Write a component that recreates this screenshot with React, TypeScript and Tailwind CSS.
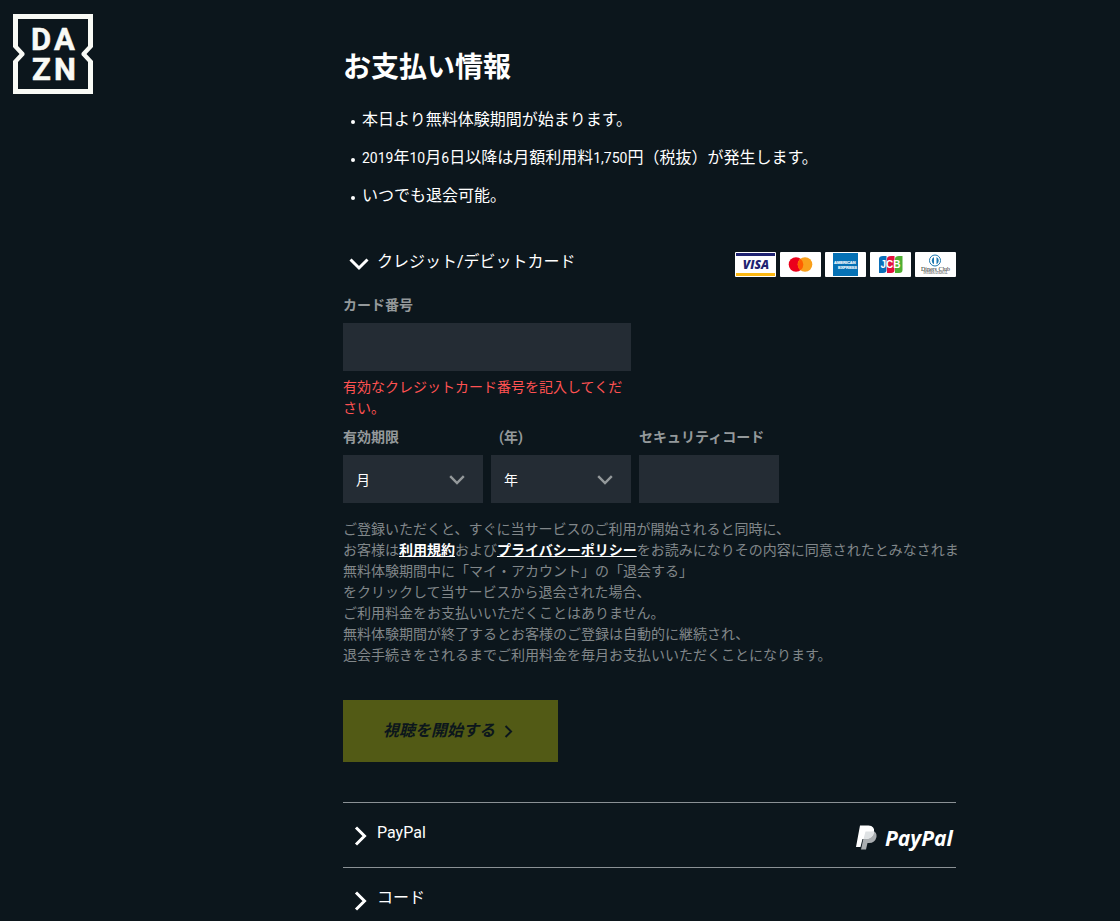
import React from 'react';
import clsx from 'clsx';

const notes = [
  '本日より無料体験期間が始まります。',
  '2019年10月6日以降は月額利用料1,750円（税抜）が発生します。',
  'いつでも退会可能。',
];

const months = Array.from({ length: 12 }, (_, i) => String(i + 1));
const years = Array.from({ length: 10 }, (_, i) => String(2019 + i));

function DaznLogo() {
  return (
    <svg width="80" height="80" viewBox="0 0 80 80" role="img" aria-label="DAZN">
      <path
        d="M0 0H80V33L73.500 40L80 47V80H0V47L6.500 40L0 33V0ZM5 5V32L11.500 39V41L5 48V75H75V48L68.500 41V39L75 32V5Z"
        fill="#f9faf5"
        fillRule="evenodd"
      />
      <g
        fill="#f9faf5"
        stroke="#f9faf5"
        strokeWidth="0.500"
        fontFamily="Roboto, sans-serif"
        fontWeight="700"
        fontSize="31"
      >
        <text x="18 41" y="36">DA</text>
        <text x="19 41" y="66">ZN</text>
      </g>
    </svg>
  );
}

interface ChevronProps {
  direction: 'down' | 'right';
  className?: string;
}

function Chevron({ direction, className }: ChevronProps) {
  return (
    <svg
      viewBox="0 0 20 20"
      fill="none"
      stroke="currentColor"
      strokeWidth="3"
      className={clsx('shrink-0', className)}
      aria-hidden="true"
    >
      <path d={direction === 'down' ? 'M1.500 6.500L10 15L18.500 6.500' : 'M7 1.500L15.500 10L7 18.500'} />
    </svg>
  );
}

function CardIcon({ label, children }: { label: string; children: React.ReactNode }) {
  return (
    <svg width="41" height="25" viewBox="0 0 41 25" role="img" aria-label={label}>
      <rect width="41" height="25" rx="1" fill="#fff" />
      {children}
    </svg>
  );
}

function CardIcons() {
  return (
    <span className="flex gap-1">
      <CardIcon label="Visa">
        <path d="M1 1H40V4H1Z" fill="#1f2372" />
        <path d="M1 21H40V24H1Z" fill="#fcb813" />
        <text x="21" y="17" textAnchor="middle" fontFamily="Open Sans, sans-serif" fontSize="12" fontWeight="800" fontStyle="italic" fill="#1f2372">
          VISA
        </text>
      </CardIcon>
      <CardIcon label="Mastercard">
        <circle cx="16" cy="12.500" r="7.300" fill="#eb001b" />
        <circle cx="25" cy="12.500" r="7.300" fill="#f9a01b" />
        <path d="M20.500 6.700a7.300 7.300 0 0 1 0 11.600a7.300 7.300 0 0 1 0-11.600Z" fill="#ff5f00" />
      </CardIcon>
      <CardIcon label="American Express">
        <path d="M8 1H33V24H8Z" fill="#0571b5" />
        <g fontFamily="Liberation Sans, sans-serif" fontSize="4" fontWeight="700" fill="#e8f3fa" stroke="#e8f3fa" strokeWidth="0.200">
          <text x="9" y="12">AMERICAN</text>
          <text x="13" y="17">EXPRESS</text>
        </g>
      </CardIcon>
      <CardIcon label="JCB">
        <path d="M13 4H16.500V18Q16.500 21 13 21H9V7Q9 4 13 4Z" fill="#0b6fb8" />
        <path d="M21 4H24.500V18Q24.500 21 21 21H17V7Q17 4 21 4Z" fill="#e3103c" />
        <path d="M29 4H32.500V18Q32.500 21 29 21H25V7Q25 4 29 4Z" fill="#4fae32" />
        <text x="20.500" y="16" textAnchor="middle" fontFamily="Liberation Sans, sans-serif" fontSize="10" fontWeight="700" fill="#fff">
          JCB
        </text>
      </CardIcon>
      <CardIcon label="Diners Club International">
        <circle cx="20" cy="8.500" r="5.500" fill="#fff" stroke="#1d78b0" strokeWidth="1" />
        <path d="M19 5a4 4 0 0 0 0 7.200ZM21.500 5v7.200a4 4 0 0 0 0-7.200Z" fill="#1d78b0" />
        <text x="20.500" y="19" textAnchor="middle" fontFamily="Liberation Serif, serif" fontSize="6" fill="#222">
          Diners Club
        </text>
        <text x="20.500" y="22" textAnchor="middle" fontFamily="Liberation Serif, serif" fontSize="3" fill="#222">
          INTERNATIONAL
        </text>
      </CardIcon>
    </span>
  );
}

function PayPalLogo() {
  return (
    <svg width="100" height="30" viewBox="0 0 100 30" role="img" aria-label="PayPal">
      <path d="M9 6H17Q21 7 20.500 12Q19 18 13 18H11.500L10 24.500H5Z" fill="#a9adb0" />
      <path d="M4 0.500H12.500Q19 1 18 7Q16.500 14 9.500 14H6.500L4.500 22H0Z" fill="#fff" />
      <path d="M9.500 6.500H16L18.200 6Q17.500 14 9.500 14H7.500Z" fill="#dfe2e4" />
      <text x="29" y="21" fontFamily="Open Sans, sans-serif" fontSize="21" fontWeight="700" fontStyle="italic" fill="#fff">
        PayPal
      </text>
    </svg>
  );
}

// Numerals are set a size smaller than the Japanese text around them
function NoteText({ text }: { text: string }) {
  return (
    <span>
      {text.split(/([\d,]+)/).map((part, index) =>
        /\d/.test(part) ? <span key={index} className="text-sm leading-none">{part}</span> : part
      )}
    </span>
  );
}

interface FieldProps {
  id: string;
  label: string;
  labelClassName?: string;
  className?: string;
  children: React.ReactNode;
}

function Field({ id, label, labelClassName, className, children }: FieldProps) {
  return (
    <div className={className}>
      <label htmlFor={id} className={clsx('mb-2 block text-sm font-bold text-[#94999b]', labelClassName)}>
        {label}
      </label>
      {children}
    </div>
  );
}

function SelectBox({ id, placeholder, options }: { id: string; placeholder: string; options: string[] }) {
  return (
    <div className="relative">
      <select id={id} defaultValue="" className="block h-12 w-full appearance-none bg-[#242c34] pt-px pr-10 pl-[13px] text-sm text-white">
        <option value="">{placeholder}</option>
        {options.map((option) => (
          <option key={option} value={option}>{option}</option>
        ))}
      </select>
      <Chevron direction="down" className="pointer-events-none absolute top-4 right-[18px] size-4 text-[#94999b]" />
    </div>
  );
}

export default function App() {
  return (
    <div className="flex min-h-screen flex-col bg-[#0c161c] font-[Roboto,'Noto_Sans_CJK_JP',sans-serif] text-white md:flex-row">
      <header className="shrink-0 pt-[14px] pl-[13px] md:w-[343px]">
        <DaznLogo />
      </header>

      <main className="min-w-0 max-w-[613px] flex-1 px-4 pt-[47px] md:px-0">
        <h1 className="mb-5 text-[28px] leading-[42px] font-bold">お支払い情報</h1>

        <ul className="space-y-4">
          {notes.map((note) => (
            <li key={note} className="flex items-center gap-[7px] pl-2 leading-[22px]">
              <span className="mt-1 size-1 shrink-0 rounded-full bg-white" />
              <NoteText text={note} />
            </li>
          ))}
        </ul>

        <section className="mt-[45px]">
          <button type="button" aria-expanded="true" className="flex w-full items-start justify-between">
            <span className="flex items-start gap-2 pl-[6px]">
              <Chevron direction="down" className="mt-[1px] size-5" />
              <span className="leading-5">クレジット/デビットカード</span>
            </span>
            <CardIcons />
          </button>

          <form className="mt-[18px]" onSubmit={(e) => e.preventDefault()}>
            <Field id="card-number" label="カード番号" className="max-w-72">
              <input id="card-number" type="text" inputMode="numeric" aria-describedby="card-error" className="block h-12 w-full bg-[#242c34] px-3 text-sm" />
              <p id="card-error" className="mt-[6px] text-sm leading-[21px] text-[#ff5252]">
                有効なクレジットカード番号を記入してください。
              </p>
            </Field>

            <div className="mt-2 grid max-w-[436px] grid-cols-3 gap-2">
              <Field id="month" label="有効期限">
                <SelectBox id="month" placeholder="月" options={months} />
              </Field>
              <Field id="year" label="(年)" labelClassName="pl-2">
                <SelectBox id="year" placeholder="年" options={years} />
              </Field>
              <Field id="cvv" label="セキュリティコード">
                <input id="cvv" type="text" inputMode="numeric" className="block h-12 w-full bg-[#242c34] px-3 text-sm" />
              </Field>
            </div>

            <p className="mt-4 text-sm leading-[21px] text-[#81878a] md:whitespace-nowrap">
              ご登録いただくと、すぐに当サービスのご利用が開始されると同時に、
              <br />
              お客様は<a href="#terms" className="font-bold text-white underline [text-decoration-skip-ink:none]">利用規約</a>および<a href="#privacy" className="font-bold text-white underline [text-decoration-skip-ink:none]">プライバシーポリシー</a>をお読みになりその内容に同意されたとみなされま
              <br />
              無料体験期間中に「マイ・アカウント」の「退会する」
              <br />
              をクリックして当サービスから退会された場合、
              <br />
              ご利用料金をお支払いいただくことはありません。
              <br />
              無料体験期間が終了するとお客様のご登録は自動的に継続され、
              <br />
              退会手続きをされるまでご利用料金を毎月お支払いいただくことになります。
            </p>

            <button type="submit" className="mt-[34px] flex h-[62px] min-w-[215px] items-center gap-[6px] bg-[#525a15] px-10 font-bold text-[#0c161c] italic">
              視聴を開始する
              <Chevron direction="right" className="size-[13px]" />
            </button>
          </form>
        </section>

        <section className="mt-10 h-[65px] border-t border-[#8b9195] pt-[22px]">
          <button type="button" aria-expanded="false" className="flex w-full items-start justify-between">
            <span className="flex items-start gap-2 pl-[6px]">
              <Chevron direction="right" className="mt-[1px] size-5" />
              <span className="leading-4">PayPal</span>
            </span>
            <PayPalLogo />
          </button>
        </section>

        <section className="border-t border-[#8b9195] pt-[22px]">
          <button type="button" aria-expanded="false" className="flex w-full items-start gap-2 pl-[6px]">
            <Chevron direction="right" className="mt-[1px] size-5" />
            <span className="leading-4">コード</span>
          </button>
        </section>
      </main>
    </div>
  );
}
